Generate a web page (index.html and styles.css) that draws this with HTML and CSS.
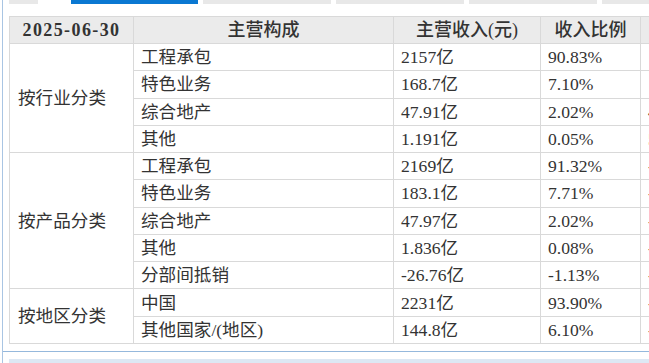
FILE: index.html
```html
<!DOCTYPE html>
<html lang="zh-CN">
<head>
<meta charset="utf-8">
<title>主营构成</title>
<link rel="stylesheet" href="styles.css">
</head>
<body>
<div class="outer">
  <div class="panel">
    <div class="tabs">
      <span class="tab tab-stub"></span>
      <span class="tab tab-active"></span>
      <span class="tab"></span>
      <span class="tab"></span>
      <span class="tab"></span>
      <span class="tab"></span>
    </div>
    <div class="table-wrap">
      <table class="data">
        <colgroup>
          <col class="c1"><col class="c2"><col class="c3"><col class="c4"><col class="c5">
        </colgroup>
        <thead>
          <tr>
            <th class="date">2025-06-30</th>
            <th>主营构成</th>
            <th>主营收入(元)</th>
            <th>收入比例</th>
            <th>主营成本</th>
          </tr>
        </thead>
        <tbody>
          <tr>
            <td class="group" rowspan="4">按行业分类</td>
            <td>工程承包</td><td>2157亿</td><td>90.83%</td><td>1978亿</td>
          </tr>
          <tr><td>特色业务</td><td>168.7亿</td><td>7.10%</td><td>139.9亿</td></tr>
          <tr><td>综合地产</td><td>47.91亿</td><td>2.02%</td><td>43.28亿</td></tr>
          <tr><td>其他</td><td>1.191亿</td><td>0.05%</td><td>5712万</td></tr>
          <tr>
            <td class="group" rowspan="5">按产品分类</td>
            <td>工程承包</td><td>2169亿</td><td>91.32%</td><td>--</td>
          </tr>
          <tr><td>特色业务</td><td>183.1亿</td><td>7.71%</td><td>--</td></tr>
          <tr><td>综合地产</td><td>47.97亿</td><td>2.02%</td><td>--</td></tr>
          <tr><td>其他</td><td>1.836亿</td><td>0.08%</td><td>--</td></tr>
          <tr><td>分部间抵销</td><td>-26.76亿</td><td>-1.13%</td><td>--</td></tr>
          <tr>
            <td class="group" rowspan="2">按地区分类</td>
            <td>中国</td><td>2231亿</td><td>93.90%</td><td>--</td>
          </tr>
          <tr><td>其他国家/(地区)</td><td>144.8亿</td><td>6.10%</td><td>--</td></tr>
        </tbody>
      </table>
    </div>
  </div>
  <div class="next-bar"></div>
</div>
</body>
</html>
```

FILE: styles.css
```css
html, body {
  margin: 0;
  padding: 0;
  background: #ffffff;
}
body {
  width: 649px;
  height: 363px;
  overflow: hidden;
  font-family: "Liberation Serif", "Noto Sans CJK SC", serif;
  color: #333333;
}
.outer {
  margin-left: 2px;
  border-left: 1px solid #a9c5e3;
  height: 363px;
  box-sizing: border-box;
}
.panel {
  padding-left: 6px;
  padding-bottom: 7px;
  border-bottom: 1px solid #95b8dc;
}
.tabs {
  display: flex;
  height: 4px;
  gap: 5px;
  overflow: hidden;
  width: 800px;
}
.tab {
  flex: 0 0 128px;
  height: 4px;
  background: #e8e8e8;
}
.tab-stub {
  flex-basis: 29px;
  margin-right: 28px;
}
.tab-active {
  flex-basis: 127px;
  background: #0a78d2;
}
.table-wrap {
  margin-top: 12px;
  overflow: hidden;
}
.data {
  border-collapse: collapse;
  table-layout: fixed;
  width: 731px;
  font-size: 17.6px;
}
.c1 { width: 124px; }
.c2 { width: 260px; }
.c3 { width: 147px; }
.c4 { width: 100px; }
.c5 { width: 100px; }
.data th,
.data td {
  border: 1px solid #d9d9d9;
  padding: 0 0 0 7px;
  white-space: nowrap;
  line-height: 20px;
  text-align: left;
  vertical-align: middle;
}
.data thead tr { height: 27px; }
.data tbody tr { height: 27.27px; }
.data th {
  background: #ebebeb;
  text-align: center;
  padding: 0;
  font-size: 18px;
  font-weight: 500;
  color: #333333;
}
.data th.date {
  font-weight: 700;
  letter-spacing: 1.4px;
  font-family: "Liberation Serif", serif;
}
.data td.group {
  padding-left: 8px;
}
.next-bar {
  margin: 7px 0 0 6px;
  height: 10px;
  background: #dde8f4;
}
```
